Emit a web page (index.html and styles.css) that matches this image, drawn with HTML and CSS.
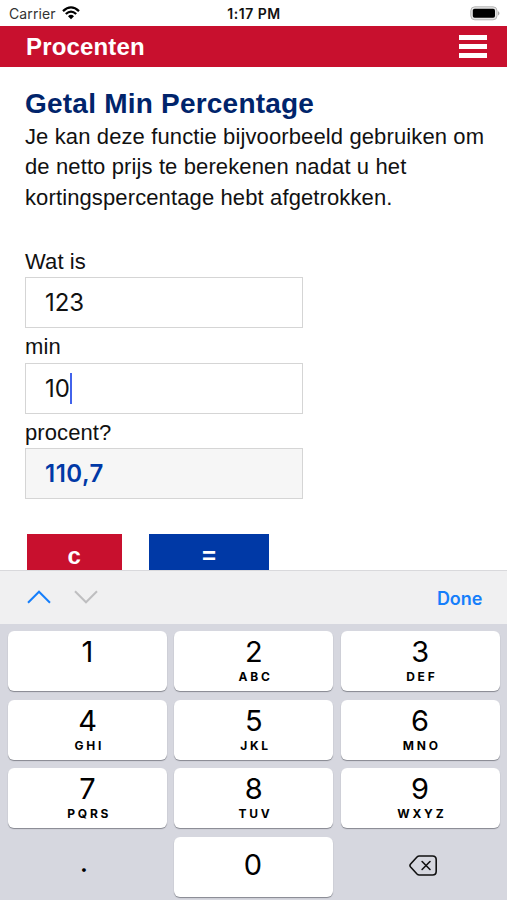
FILE: index.html
```html
<!DOCTYPE html>
<html lang="nl">
<head>
<meta charset="utf-8">
<title>Procenten</title>
<link rel="stylesheet" href="styles.css">
</head>
<body>
<div class="phone">
  <div class="status">
    <div class="carrier"><span>Carrier</span>
      <svg class="wifi" width="18" height="14" viewBox="0 0 18 14" fill="none" stroke="#000" stroke-width="2.3"><path d="M1 5.1Q9-2.3 17 5.1M3.8 8Q9 3.2 14.2 8"/><path d="M6 10.2Q9 7.5 12 10.2L9 13.2Z" fill="#000" stroke="none"/></svg>
    </div>
    <span class="time">1:17 PM</span>
    <svg class="battery" width="31" height="15" viewBox="0 0 31 15"><rect x=".8" y=".8" width="26.2" height="13" rx="4" fill="#e6e6e6" stroke="#b5b5b5"/><rect x="2.8" y="2.8" width="22.2" height="9" rx="1.8"/><path d="M28 5Q31 7.3 28 9.6Z" fill="#aaa"/></svg>
  </div>
  <header class="header">
    <span class="brand">Procenten</span>
    <div class="menu"><i></i><i></i><i></i></div>
  </header>
  <main class="content">
    <h1>Getal Min Percentage</h1>
    <p>Je kan deze functie bijvoorbeeld gebruiken om<br>de netto prijs te berekenen nadat u het<br>kortingspercentage hebt afgetrokken.</p>
    <div class="form">
      <label>Wat is</label>
      <div class="field">123</div>
      <label>min</label>
      <div class="field">10<span class="caret"></span></div>
      <label>procent?</label>
      <div class="field result">110,7</div>
    </div>
    <div class="actions">
      <div class="btn clear">c</div>
      <div class="btn equals">=</div>
    </div>
  </main>
  <div class="accessory">
    <div class="arrows">
      <svg width="24" height="14" viewBox="0 0 24 14" fill="none" stroke="#157efb" stroke-width="2"><path d="M1 12.7 12 1.7 23 12.7"/></svg>
      <svg width="24" height="14" viewBox="0 0 24 14" fill="none" stroke="#bebec0" stroke-width="2"><path d="M1 1.3 12 12.3 23 1.3"/></svg>
    </div>
    <span class="done">Done</span>
  </div>
  <div class="keyboard">
    <div class="key"><b>1</b></div>
    <div class="key"><b>2</b><small>ABC</small></div>
    <div class="key"><b>3</b><small>DEF</small></div>
    <div class="key"><b>4</b><small>GHI</small></div>
    <div class="key"><b>5</b><small>JKL</small></div>
    <div class="key"><b>6</b><small>MNO</small></div>
    <div class="key"><b>7</b><small>PQRS</small></div>
    <div class="key"><b>8</b><small>TUV</small></div>
    <div class="key"><b>9</b><small>WXYZ</small></div>
    <div class="key plain dot"><b>.</b></div>
    <div class="key zero"><b>0</b></div>
    <div class="key plain"><svg width="28" height="21" viewBox="0 0 28 21" fill="none" stroke="#111" stroke-width="1.6" stroke-linejoin="round" stroke-linecap="round"><path d="M10.3 1H23.5Q27.2 1 27.2 4.7V16.3Q27.2 20 23.5 20H10.3Q9 20 8 19L1.6 12Q.3 10.5 1.6 9L8 2Q9 1 10.3 1Z"/><path d="M13.1 6.5 21 14.5M21 6.5 13.1 14.5"/></svg></div>
  </div>
</div>
</body>
</html>
```
FILE: styles.css
```css
* { box-sizing: border-box; }
body { margin: 0; background: #fff; color: #111; font-family: "Liberation Sans", Arial, sans-serif; }
.phone { width: 507px; height: 900px; overflow: hidden; display: flex; flex-direction: column; }
.status { flex: none; height: 25.5px; display: grid; grid-template-columns: 1fr auto 1fr; align-items: center; padding: 1.5px 8px 0 9px; font: 14px/18px Inter, sans-serif; }
.carrier { display: flex; align-items: center; gap: 6px; color: #333; }
.carrier span { letter-spacing: .12px; }
.wifi { margin-top: -2px; }
.time { font-weight: 600; font-size: 14px; letter-spacing: .5px; }
.battery { justify-self: end; margin-right: -1.5px; }
.header { flex: none; height: 41.5px; background: #c8102e; display: flex; align-items: center; justify-content: space-between; padding: 0 20px 0 26px; }
.brand { color: #fff; font-weight: 700; font-size: 24px; letter-spacing: .15px; padding-top: 1px; }
.menu { width: 28px; display: grid; gap: 3.5px; }
.menu i { height: 5.5px; background: #fff; }
.content { flex: none; height: 502.5px; overflow: hidden; padding: 20px 20px 0 25px; }
h1 { margin: 0; font-size: 28px; line-height: 33px; letter-spacing: .22px; color: #00246b; white-space: nowrap; }
p { margin: 0; padding-top: 1.5px; font-size: 22px; line-height: 30.5px; letter-spacing: .12px; white-space: nowrap; }
.form { width: 278px; margin-top: 32.5px; }
label { display: block; height: 31.5px; font-size: 22px; line-height: 31px; letter-spacing: .1px; }
.field { height: 51px; margin-bottom: 3px; border: 1.5px solid #d5d5d5; padding: 0 19px; font: 24px/49px Inter, sans-serif; letter-spacing: -.1px; display: flex; align-items: center; }
.result { background: #f6f6f6; color: #0039a6; font-weight: 600; letter-spacing: .5px; }
.caret { width: 2px; height: 31px; background: #4263eb; }
.actions { display: flex; gap: 27px; margin: 35px 0 0 1.5px; }
.btn { height: 48px; width: 95.5px; background: #c8102e; color: #fff; font-weight: 700; font-size: 24px; line-height: 44px; text-align: center; }
.equals { width: 120px; background: #0039a6; }
.accessory { flex: none; height: 54.5px; background: #f0f0f1; border-top: 1px solid #d9d9dc; display: flex; align-items: center; justify-content: space-between; padding: 0 24.5px 0 27px; }
.arrows { display: flex; gap: 23px; }
.done { color: #157efb; font: 600 18px/22px Inter, sans-serif; padding-top: 3px; }
.keyboard { flex: 1; background: #d6d7df; display: grid; grid-template-columns: repeat(3, 159px); grid-auto-rows: 60px; gap: 8.5px 7.3px; padding: 7px 0 0 8px; font-family: Inter, sans-serif; }
.key { background: #fff; border-radius: 6px; box-shadow: 0 1px 1px #85878f; display: flex; flex-direction: column; align-items: center; color: #000; }
.key b { font-weight: 400; font-size: 29px; line-height: 32px; margin-top: 5px; }
.key small { font-weight: 700; font-size: 12px; line-height: 14px; letter-spacing: 2.8px; margin: 2px -3.5px 0 0; }
.plain { background: none; box-shadow: none; justify-content: center; }
.dot b { margin: -10px 7px 0 0; }
.key.zero { justify-content: center; }
.key.zero b { margin: -3px 2px 0 0; }
.plain svg { margin: -2px 0 0 6px; }
```
